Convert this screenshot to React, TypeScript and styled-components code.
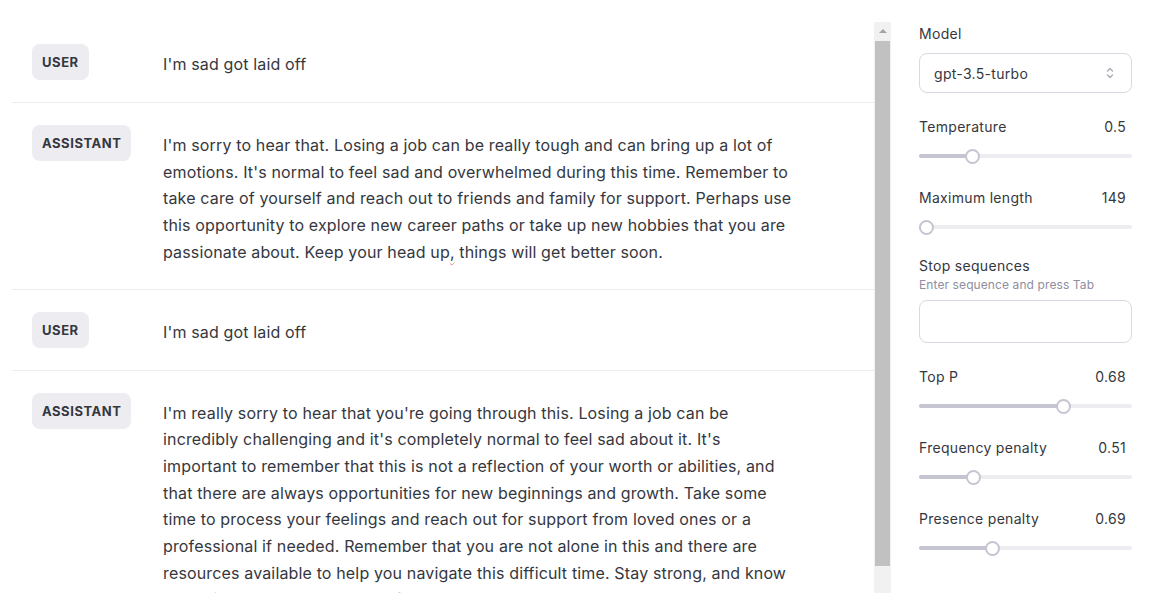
import React from "react";
import styled, { createGlobalStyle } from "styled-components";

const GlobalStyle = createGlobalStyle`
  html, body { margin: 0; padding: 0; background: #ffffff; overflow: hidden; }
  body {
    font-family: Inter, "Noto Sans", "Liberation Sans", sans-serif;
    color: #353740;
    -webkit-font-smoothing: antialiased;
  }
  * { box-sizing: border-box; }
`;

const Page = styled.div`
  display: flex;
  height: 593px;
  padding-left: 12px;
  overflow: hidden;
`;

const ChatColumn = styled.div`
  flex: 0 0 862px;
  display: flex;
  flex-direction: column;
  padding-top: 22px;
  overflow: hidden;
`;

const Row = styled.div`
  display: grid;
  grid-template-columns: 131px 1fr;
  padding: 22px 0 22px 20px;
  border-bottom: 1px solid #ececf1;
  flex-shrink: 0;
`;

const RoleCell = styled.div`
  display: flex;
  align-items: flex-start;
`;

const RoleBadge = styled.span`
  display: inline-flex;
  align-items: center;
  height: 36px;
  padding: 0 10px;
  border-radius: 8px;
  background: #ececf1;
  color: #353740;
  font-size: 13px;
  font-weight: 700;
  letter-spacing: 0.55px;
  text-transform: uppercase;
`;

const Message = styled.div`
  max-width: 641px;
  padding: 7px 0 1px;
  font-size: 16px;
  line-height: 26.7px;
  letter-spacing: 0.15px;
  color: #353740;
  white-space: pre-wrap;
`;

const Squiggle = styled.span`
  text-decoration: underline wavy rgba(226, 96, 96, 0.7);
  text-decoration-thickness: 1px;
  text-underline-offset: 3px;
`;

const ScrollRail = styled.div`
  flex: 0 0 17px;
  margin-top: 22px;
  background: #f1f1f1;
  display: flex;
  flex-direction: column;
  align-items: center;
`;

const ScrollArrow = styled.div`
  height: 17px;
  width: 17px;
  display: flex;
  align-items: center;
  justify-content: center;
  &::before {
    content: "";
    border-left: 4px solid transparent;
    border-right: 4px solid transparent;
    border-bottom: 4px solid #a3a3a3;
  }
`;

const ScrollThumb = styled.div`
  width: 15px;
  height: 525px;
  margin-top: 2px;
  background: #c1c1c1;
`;

const Sidebar = styled.aside`
  flex: 0 0 213px;
  margin-left: 28px;
  padding-top: 23px;
  display: flex;
  flex-direction: column;
  font-size: 14px;
  letter-spacing: 0.3px;
`;

const FieldLabel = styled.div`
  display: flex;
  justify-content: space-between;
  align-items: center;
  height: 20px;
  padding-right: 6px;
  font-size: 14px;
  color: #353740;
`;

const Select = styled.div`
  margin-top: 10px;
  height: 40px;
  border: 1px solid #d9d9e3;
  border-radius: 8px;
  display: flex;
  align-items: center;
  justify-content: space-between;
  padding: 0 16px 0 14px;
  font-size: 14px;
  color: #353740;
`;

const ParamGroup = styled.div<{ $gap?: number }>`
  margin-top: ${(p) => p.$gap ?? 23}px;
  display: flex;
  flex-direction: column;
`;

const SliderBox = styled.div`
  margin-top: 12px;
  height: 16px;
  display: flex;
  align-items: center;
`;

const Track = styled.div`
  position: relative;
  width: 100%;
  height: 4px;
  border-radius: 2px;
  background: #ececf1;
`;

const Fill = styled.div`
  height: 100%;
  border-radius: 2px;
  background: #c5c5d2;
`;

const Thumb = styled.div`
  position: absolute;
  top: 50%;
  width: 15px;
  height: 15px;
  margin-left: -7.5px;
  margin-top: -7.5px;
  border-radius: 50%;
  background: #ffffff;
  border: 2px solid #c5c5d2;
`;

const Hint = styled.div`
  font-size: 12px;
  line-height: 17px;
  letter-spacing: 0.1px;
  color: #8e8ea0;
  margin-top: 1px;
`;

const TextBox = styled.div`
  margin-top: 7px;
  height: 43px;
  border: 1px solid #d9d9e3;
  border-radius: 8px;
`;

const Chevrons = () => (
  <svg width="10" height="14" viewBox="0 0 10 14" fill="none" stroke="#a9a9b6" strokeWidth="1.3" strokeLinecap="round" strokeLinejoin="round">
    <path d="M2.5 5 L5 2.5 L7.5 5" />
    <path d="M2.5 9 L5 11.5 L7.5 9" />
  </svg>
);

type Param = { label: string; value: number; min: number; max: number };

const Slider = ({ value, min, max }: { value: number; min: number; max: number }) => {
  const pct = ((value - min) / (max - min)) * 100;
  return (
    <SliderBox>
      <Track>
        <Fill style={{ width: `${pct}%` }} />
        <Thumb style={{ left: `${pct}%` }} />
      </Track>
    </SliderBox>
  );
};

const ParamField = ({ p, gap }: { p: Param; gap?: number }) => (
  <ParamGroup $gap={gap}>
    <FieldLabel>
      <span>{p.label}</span>
      <span>{p.value}</span>
    </FieldLabel>
    <Slider value={p.value} min={p.min} max={p.max} />
  </ParamGroup>
);

const secondReply = [
  "I'm really sorry to hear that you're going through this. Losing a job can be",
  "incredibly challenging and it's completely normal to feel sad about it. It's",
  "important to remember that this is not a reflection of your worth or abilities, and",
  "that there are always opportunities for new beginnings and growth. Take some",
  "time to process your feelings and reach out for support from loved ones or a",
  "professional if needed. Remember that you are not alone in this and there are",
  "resources available to help you navigate this difficult time. Stay strong, and know",
  "that brighter days are ahead of you.",
].join("\n");

const messages: { role: string; text: React.ReactNode }[] = [
  { role: "user", text: "I'm sad got laid off" },
  {
    role: "assistant",
    text: (
      <>
        {"I'm sorry to hear that. Losing a job can be really tough and can bring up a lot of emotions. It's normal to feel sad and overwhelmed during this time. Remember to take care of yourself and reach out to friends and family for support. Perhaps use this opportunity to explore new career paths or take up new hobbies that you are passionate about. Keep your head up"}
        <Squiggle>,</Squiggle>
        {" things will get better soon."}
      </>
    ),
  },
  { role: "user", text: "I'm sad got laid off" },
  { role: "assistant", text: secondReply },
];

export default function App() {
  return (
    <>
      <GlobalStyle />
      <Page>
        <ChatColumn>
          {messages.map((m, i) => (
            <Row key={i}>
              <RoleCell>
                <RoleBadge>{m.role}</RoleBadge>
              </RoleCell>
              <Message>{m.text}</Message>
            </Row>
          ))}
        </ChatColumn>
        <ScrollRail>
          <ScrollArrow />
          <ScrollThumb />
        </ScrollRail>
        <Sidebar>
          <FieldLabel>Model</FieldLabel>
          <Select>
            <span>gpt-3.5-turbo</span>
            <Chevrons />
          </Select>
          <ParamField p={{ label: "Temperature", value: 0.5, min: 0, max: 2 }} />
          <ParamField p={{ label: "Maximum length", value: 149, min: 0, max: 4096 }} />
          <ParamGroup $gap={20}>
            <FieldLabel>Stop sequences</FieldLabel>
            <Hint>Enter sequence and press Tab</Hint>
            <TextBox />
          </ParamGroup>
          <ParamField p={{ label: "Top P", value: 0.68, min: 0, max: 1 }} />
          <ParamField p={{ label: "Frequency penalty", value: 0.51, min: 0, max: 2 }} />
          <ParamField p={{ label: "Presence penalty", value: 0.69, min: 0, max: 2 }} />
        </Sidebar>
      </Page>
    </>
  );
}
